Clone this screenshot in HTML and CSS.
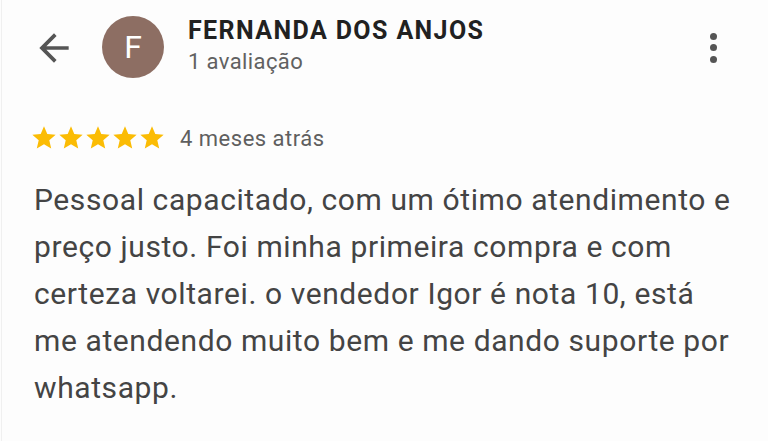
FILE: index.html
```html
<!DOCTYPE html>
<html lang="pt">
<head>
<meta charset="utf-8">
<link rel="stylesheet" href="styles.css">
</head>
<body>
<div class="page">
  <header class="header">
    <svg class="back" viewBox="0 0 24 24" width="44" height="44"><path d="M20 11H7.83l5.59-5.59L12 4l-8 8 8 8 1.41-1.41L7.83 13H20v-2z" fill="#555"/></svg>
    <div class="avatar">F</div>
    <div class="who">
      <div class="name">FERNANDA DOS ANJOS</div>
      <div class="count">1 avaliação</div>
    </div>
    <div class="more"><span></span><span></span><span></span></div>
  </header>
  <div class="meta">
    <div class="stars">
      <svg viewBox="0 0 24 24" width="28" height="28"><path d="M12 17.27L18.18 21l-1.64-7.03L22 9.24l-7.19-.61L12 2 9.19 8.63 2 9.24l5.46 4.73L5.82 21z"/></svg>
      <svg viewBox="0 0 24 24" width="28" height="28"><path d="M12 17.27L18.18 21l-1.64-7.03L22 9.24l-7.19-.61L12 2 9.19 8.63 2 9.24l5.46 4.73L5.82 21z"/></svg>
      <svg viewBox="0 0 24 24" width="28" height="28"><path d="M12 17.27L18.18 21l-1.64-7.03L22 9.24l-7.19-.61L12 2 9.19 8.63 2 9.24l5.46 4.73L5.82 21z"/></svg>
      <svg viewBox="0 0 24 24" width="28" height="28"><path d="M12 17.27L18.18 21l-1.64-7.03L22 9.24l-7.19-.61L12 2 9.19 8.63 2 9.24l5.46 4.73L5.82 21z"/></svg>
      <svg viewBox="0 0 24 24" width="28" height="28"><path d="M12 17.27L18.18 21l-1.64-7.03L22 9.24l-7.19-.61L12 2 9.19 8.63 2 9.24l5.46 4.73L5.82 21z"/></svg>
    </div>
    <span class="when">4 meses atrás</span>
  </div>
  <p class="text">Pessoal capacitado, com um ótimo atendimento e preço justo. Foi minha primeira compra e com certeza voltarei. o vendedor Igor é nota 10, está me atendendo muito bem e me dando suporte por whatsapp.</p>
</div>
</body>
</html>
```
FILE: styles.css
```css
html, body {
  margin: 0;
  padding: 0;
  background: #fdfdfd;
}
body {
  font-family: Roboto, "Noto Sans", sans-serif;
  width: 768px;
  height: 441px;
  overflow: hidden;
}
.page {
  height: 441px;
  border-left: 1px solid #f0f0f0;
  box-sizing: border-box;
  margin-left: 1px;
}
.header {
  display: flex;
  align-items: center;
  padding: 15px 0 0 30px;
  height: 63px;
}
.back {
  display: block;
  margin-top: 2px;
  flex-shrink: 0;
}
.avatar {
  width: 62px;
  height: 62px;
  border-radius: 50%;
  background: #8d6e63;
  color: #fff;
  font-size: 32px;
  display: flex;
  align-items: center;
  justify-content: center;
  margin-left: 26px;
  flex-shrink: 0;
}
.who {
  margin-left: 24px;
  flex: 1;
  align-self: flex-start;
  margin-top: 1px;
}
.name {
  font-size: 25px;
  font-weight: 700;
  color: #212121;
  line-height: 30px;
  letter-spacing: 1.4px;
}
.count {
  font-size: 22px;
  color: #616161;
  line-height: 30px;
  margin-top: 1px;
  letter-spacing: 0.4px;
}
.more {
  display: flex;
  flex-direction: column;
  gap: 4.5px;
  margin-right: 51px;
  margin-top: 2px;
}
.more span {
  width: 7px;
  height: 7px;
  border-radius: 50%;
  background: #555;
}
.meta {
  display: flex;
  align-items: center;
  margin: 46px 0 0 28px;
}
.stars {
  display: flex;
  fill: #fbbc04;
}
.stars svg {
  display: block;
  margin-right: -1px;
}
.when {
  margin-left: 15px;
  font-size: 22px;
  color: #5f5f5f;
  letter-spacing: 0.5px;
}
.text {
  margin: 24px 32px 0 32px;
  font-size: 30px;
  line-height: 47px;
  color: #444;
  letter-spacing: 0.6px;
}
```
